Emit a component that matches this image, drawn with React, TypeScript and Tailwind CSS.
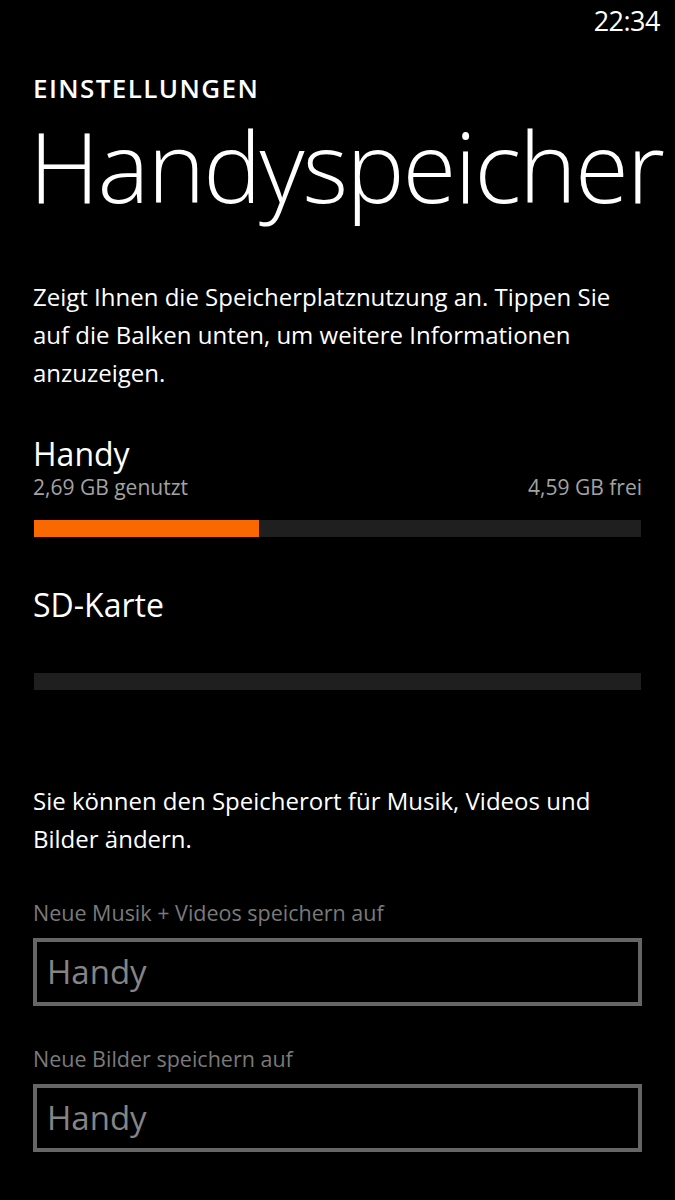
import React from "react";

export default function App() {
  const font = { fontFamily: '"Open Sans", "Noto Sans", sans-serif' };
  return (
    <div className="w-[675px] h-[1200px] bg-black text-white overflow-hidden" style={font}>
      <div className="h-[42px] flex justify-end items-start pr-[15px] pt-[3px]">
        <span className="text-[27px] leading-[36px] font-normal text-white tracking-[-0.5px]">22:34</span>
      </div>
      <div className="pl-[33px] pr-[33px]">
        <div className="mt-[31px] text-[26px] leading-[30px] font-semibold tracking-[1.4px]">EINSTELLUNGEN</div>
        <div className="-ml-[4px] mt-[14px] text-[98px] leading-[96px] font-light tracking-[-2px] whitespace-nowrap">
          Handyspeicher
        </div>
        <p className="mt-[65px] text-[24px] leading-[38px] text-white">
          Zeigt Ihnen die Speicherplatznutzung an. Tippen Sie auf die Balken unten, um weitere Informationen anzuzeigen.
        </p>

        <div className="mt-[42px] text-[32px] leading-[40px] font-normal">Handy</div>
        <div className="flex justify-between text-[21px] leading-[30px] text-[#a3a3a3] -mt-[2px]">
          <span>2,69 GB genutzt</span>
          <span>4,59 GB frei</span>
        </div>
        <div className="mt-[18px] ml-[1px] mr-[1px] h-[17px] bg-[#1f1f1f] flex">
          <div className="h-full bg-[#fa6800] w-[225px]" />
        </div>

        <div className="mt-[48px] text-[32px] leading-[40px] font-normal">SD-Karte</div>
        <div className="mt-[48px] ml-[1px] mr-[1px] h-[17px] bg-[#1f1f1f]" />

        <p className="mt-[92px] text-[24px] leading-[38px] text-white">
          Sie können den Speicherort für Musik, Videos und Bilder ändern.
        </p>

        <div className="mt-[40px] text-[21.5px] leading-[30px] text-[#7a7a7a]">Neue Musik + Videos speichern auf</div>
        <div className="mt-[10px] h-[68px] border-[4px] border-[#666666] flex items-center pl-[10px]">
          <span className="text-[33px] leading-[40px] text-[#858585]">Handy</span>
        </div>

        <div className="mt-[38px] text-[21.5px] leading-[30px] text-[#7a7a7a]">Neue Bilder speichern auf</div>
        <div className="mt-[10px] h-[68px] border-[4px] border-[#666666] flex items-center pl-[10px]">
          <span className="text-[33px] leading-[40px] text-[#858585]">Handy</span>
        </div>
      </div>
    </div>
  );
}
